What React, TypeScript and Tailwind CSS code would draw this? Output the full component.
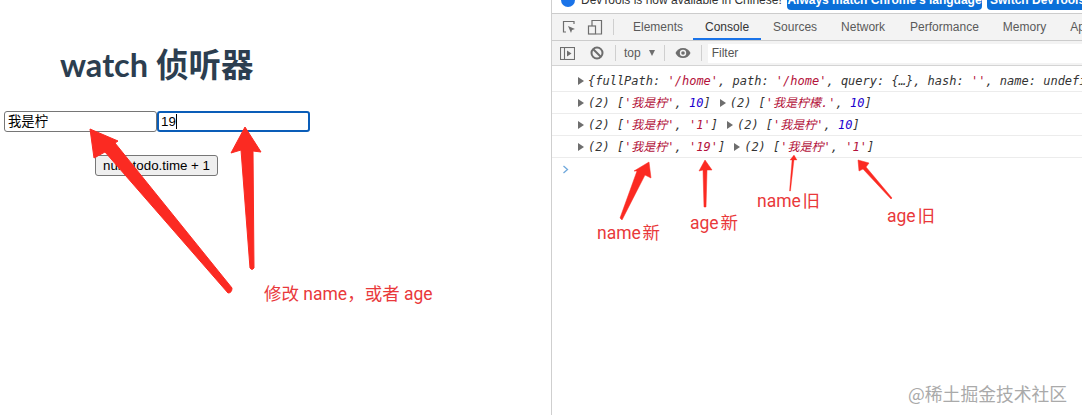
const cjk = "font-['Roboto','Noto_Sans_CJK_SC',sans-serif]"

function Triangle() {
  return <span className="inline-block w-0 h-0 border-y-[4px] border-y-transparent border-l-[6px] border-l-[#6e6e6e] mr-[4px] shrink-0" />
}

function Str({ children }: { children: string }) {
  return <span className="text-[#b3123a]">{children}</span>
}

function Num({ children }: { children: string }) {
  return <span className="text-[#1c00cf]">{children}</span>
}

function LogRow({ children }: { children: React.ReactNode }) {
  return (
    <div className="h-[22px] flex items-center pl-[26px] border-b border-[#ececec] whitespace-pre overflow-hidden">
      {children}
    </div>
  )
}

function Arr({ name, value }: { name: string; value: React.ReactNode }) {
  return (
    <span>
      (2) [<Str>{`'${name}'`}</Str>, {value}]
    </span>
  )
}

function Divider() {
  return <div className="w-px h-[16px] bg-[#cfcfcf] shrink-0" />
}

function Arrows() {
  return (
    <svg className="absolute inset-0 pointer-events-none" width="1082" height="415" viewBox="0 0 1082 415">
      <g fill="#fb2a22" stroke="#fb2a22" strokeLinejoin="round">
        <path strokeWidth="1" d="M90 129 L118 141 L115 143 L232 288 Q232 293 228 293 L105 152 L94 158 Z" />
        <path strokeWidth="1" d="M245 127 L261 152 L253 151 L254 268 Q252 271 250 268 L241 150 L231 153 Z" />
        <path strokeWidth="0.5" d="M649 162 L651 178 L645 175 L622 220 L620 218 L637 171 L634 171 Z" />
        <path strokeWidth="0.5" d="M705 160 L712 170 L707 170 L706 207 L704 207 L703 170 L699 171 Z" />
        <path strokeWidth="0.3" d="M794 155 L797 160 L794 160 L790.5 191 L789.5 191 L792 160 L790 160 Z" />
        <path strokeWidth="0.5" d="M858 160 L869 163 L866 167 L892 198 L891 199 L863 169 L859 171 Z" />
      </g>
    </svg>
  )
}

function Note({ className, children }: { className: string; children: string }) {
  return (
    <div className={`absolute text-[#e9393b] text-[17.5px] leading-[20px] whitespace-pre ${cjk} ${className}`}>
      {children}
    </div>
  )
}

export default function App() {
  return (
    <div className="relative w-[1082px] h-[415px] overflow-hidden bg-white flex font-['Liberation_Sans',sans-serif]">
      {/* page */}
      <div className="w-[551px] shrink-0">
        <h1 className="ml-[60px] mt-[46px] h-[38px] leading-[38px] text-[32.5px] font-bold text-[#2c3e50] font-['Lato','Noto_Sans_CJK_SC',sans-serif]">
          watch 侦听器
        </h1>
        <div className="ml-[4px] mt-[27px] w-[306px] flex">
          <div className="w-[153px] h-[21px] border border-[#767676] rounded-[3px] pl-[3px] text-[13.33px] leading-[19px] text-black font-['Liberation_Sans','Noto_Sans_CJK_SC',sans-serif]">
            我是柠
          </div>
          <div className="w-[153px] h-[21px] border-2 border-[#0a5db8] rounded-[3px] pl-[2px] text-[13.33px] leading-[17px] text-black">
            19<span className="inline-block w-px h-[15px] bg-black align-top mt-[1px]" />
          </div>
        </div>
        <div className="ml-[4px] w-[305px] mt-[23px] flex justify-center">
          <button className="w-[123px] h-[21px] border border-[#767676] rounded-[3px] bg-[#efefef] text-[13.33px] leading-[19px] text-black">
            num todo.time + 1
          </button>
        </div>
      </div>

      {/* devtools */}
      <div className="flex-1 border-l border-[#cfcfcf] min-w-0">
        <div className="h-[14px] border-b border-[#cccccc] flex overflow-hidden whitespace-pre text-[12px]">
          <div className="w-[14px] h-[14px] rounded-full bg-[#1a73e8] ml-[9px] -mt-[7px] shrink-0" />
          <div className="ml-[6px] w-[206px] -mt-[7px] leading-[14px] text-[#333] shrink-0">DevTools is now available in Chinese!</div>
          <div className="w-[195px] h-[10px] bg-[#0b6fd8] rounded-b-[4px] text-white font-bold text-center leading-[14px] shrink-0 overflow-hidden">
            <div className="-mt-[7px]">Always match Chrome's language</div>
          </div>
          <div className="ml-[5px] w-[120px] h-[10px] bg-[#0b6fd8] rounded-bl-[4px] text-white font-bold pl-[3px] leading-[14px] shrink-0 overflow-hidden">
            <div className="-mt-[7px]">Switch DevTools to Chinese</div>
          </div>
        </div>

        <div className="h-[27px] bg-[#f3f3f3] border-b border-[#cccccc] flex items-center text-[12px] text-[#5a5a5a] whitespace-pre">
          <svg className="ml-[9px] shrink-0" width="16" height="16" viewBox="0 0 16 16" fill="none" stroke="#6e6e6e" strokeWidth="1.2">
            <path d="M5 13H2.5V2.5H13V5" />
            <path d="M7 7L14 10L11 11L10 14Z" fill="#6e6e6e" stroke="none" />
          </svg>
          <svg className="ml-[10px] shrink-0" width="16" height="16" viewBox="0 0 16 16" fill="none" stroke="#6e6e6e" strokeWidth="1.2">
            <path d="M5 7V1.5H14.5V15H9" />
            <rect x="1.5" y="7" width="7" height="8" />
          </svg>
          <div className="w-px h-[16px] bg-[#cfcfcf] ml-[10px] mr-[7px] shrink-0" />
          <div className="pl-[12px] pr-[10px]">Elements</div>
          <div className="relative px-[12px] h-full flex items-center text-[#333]">
            Console
            <div className="absolute left-0 right-0 bottom-0 h-[2px] bg-[#1a73e8]" />
          </div>
          <div className="px-[12px]">Sources</div>
          <div className="pl-[12px] pr-[13px]">Network</div>
          <div className="px-[12px]">Performance</div>
          <div className="px-[12px]">Memory</div>
          <div className="px-[12px]">Application</div>
        </div>

        <div className="h-[25px] bg-[#f3f3f3] border-b border-[#d4d4d4] flex items-center text-[12px] text-[#5a5a5a]">
          <svg className="ml-[8px] shrink-0" width="15" height="13" viewBox="0 0 15 13" fill="none" stroke="#6e6e6e" strokeWidth="1.1">
            <rect x="0.5" y="0.5" width="14" height="12" />
            <path d="M4.5 0.5V12.5" />
            <path d="M7 3.5L11.5 6.5L7 9.5Z" fill="#6e6e6e" stroke="none" />
          </svg>
          <svg className="ml-[15px] shrink-0" width="14" height="14" viewBox="0 0 14 14" fill="none" stroke="#6e6e6e" strokeWidth="2">
            <circle cx="7" cy="7" r="5.5" />
            <path d="M3 3L11 11" />
          </svg>
          <div className="ml-[11px] mr-[8px]"><Divider /></div>
          <span>top</span>
          <span className="ml-[8px] w-0 h-0 border-x-[3px] border-x-transparent border-t-[6px] border-t-[#6e6e6e]" />
          <div className="ml-[9px] mr-[10px]"><Divider /></div>
          <svg className="shrink-0" width="16" height="12" viewBox="0 0 16 12">
            <path d="M8 1C4.500 1 1.700 3 0.500 6C1.700 9 4.500 11 8 11S14.300 9 15.500 6C14.300 3 11.500 1 8 1Z" fill="#6e6e6e" />
            <circle cx="8" cy="6" r="3.2" fill="#f3f3f3" />
            <circle cx="8" cy="6" r="1.8" fill="#6e6e6e" />
          </svg>
          <div className="ml-[10px]"><Divider /></div>
          <div className="ml-[6px] flex-1 h-[19px] bg-white flex items-center pl-[4px] text-[#555]">Filter</div>
        </div>

        <div className="pt-[4px] text-[12px] italic text-[#333] font-['DejaVu_Sans_Mono','Noto_Sans_CJK_SC',monospace]">
          <LogRow>
            <Triangle />
            <span>
              {'{fullPath: '}<Str>'/home'</Str>{', path: '}<Str>'/home'</Str>{', query: {…}, hash: '}<Str>''</Str>{', name: undefined'}
            </span>
          </LogRow>
          <LogRow>
            <Triangle />
            <Arr name="我是柠" value={<Num>10</Num>} />
            <span className="w-[9px]" />
            <Triangle />
            <Arr name="我是柠檬." value={<Num>10</Num>} />
          </LogRow>
          <LogRow>
            <Triangle />
            <Arr name="我是柠" value={<Str>'1'</Str>} />
            <span className="w-[9px]" />
            <Triangle />
            <Arr name="我是柠" value={<Num>10</Num>} />
          </LogRow>
          <LogRow>
            <Triangle />
            <Arr name="我是柠" value={<Str>'19'</Str>} />
            <span className="w-[9px]" />
            <Triangle />
            <Arr name="我是柠" value={<Str>'1'</Str>} />
          </LogRow>
          <div className="h-[22px] pl-[10px] flex items-center">
            <svg width="7" height="9" viewBox="0 0 7 9" fill="none" stroke="#6fa8dc" strokeWidth="1.3">
              <path d="M1.500 1L5.500 4.500L1.500 8" />
            </svg>
          </div>
        </div>
      </div>

      {/* annotations */}
      <Arrows />
      <Note className="left-[264px] top-[284px]">{'修改 name，或者 age'}</Note>
      <Note className="left-[597px] top-[223px]">{'name\u200a新'}</Note>
      <Note className="left-[690px] top-[213px]">{'age\u200a新'}</Note>
      <Note className="left-[757px] top-[191px]">{'name\u200a旧'}</Note>
      <Note className="left-[887px] top-[206px]">{'age\u200a旧'}</Note>
      <div className="absolute left-[908px] top-[382px] text-[17.8px] leading-[22px] text-[#aaaaaa] whitespace-pre font-['Noto_Sans_CJK_SC',sans-serif]">
        @稀土掘金技术社区
      </div>
    </div>
  )
}
